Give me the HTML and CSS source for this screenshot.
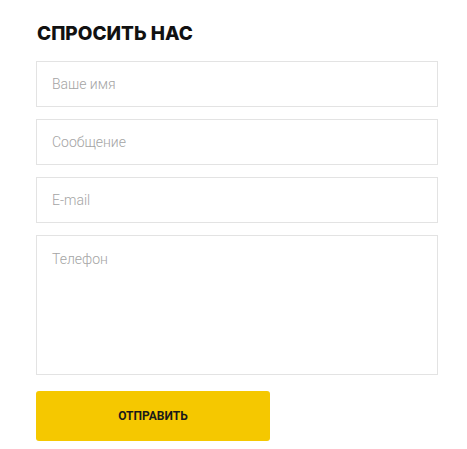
FILE: index.html
```html
<!DOCTYPE html>
<html lang="ru">
<head>
  <meta charset="UTF-8" />
  <meta name="viewport" content="width=device-width, initial-scale=1.0" />
  <title>Спросить нас</title>
  <link rel="stylesheet" href="styles.css">
</head>
<body>

<section class="ask">
  <h2>Спросить нас</h2>
  <form class="ask-form">
    <input type="text" placeholder="Ваше имя" />
    <input type="text" placeholder="Сообщение" />
    <input type="email" placeholder="E-mail" />
    <textarea placeholder="Телефон"></textarea>
    <button type="button">Отправить</button>
  </form>
</section>

</body>
</html>
```

FILE: styles.css
```css
* {
  box-sizing: border-box;
}

html, body {
  margin: 0;
  padding: 0;
  background: #fff;
  font-family: Roboto, 'Liberation Sans', sans-serif;
}

.ask {
  padding: 22px 29px 0 36px;
}

.ask h2 {
  margin: 0 0 15px 1px;
  font-family: Inter, 'Liberation Sans', sans-serif;
  font-weight: 800;
  font-size: 19px;
  line-height: 24px;
  text-transform: uppercase;
  color: #111;
}

.ask-form {
  display: flex;
  flex-direction: column;
  align-items: flex-start;
}

.ask-form input,
.ask-form textarea {
  width: 402px;
  height: 46px;
  margin-bottom: 12px;
  padding: 0 15px;
  border: 1px solid #e3e3e3;
  border-radius: 0;
  font-family: Roboto, sans-serif;
  font-weight: 300;
  font-size: 14px;
  color: #333;
  outline: none;
}

.ask-form textarea {
  height: 140px;
  padding-top: 15px;
  resize: none;
  margin-bottom: 16px;
}

.ask-form ::placeholder {
  color: #a4a4a4;
}

.ask-form button {
  width: 234px;
  height: 50px;
  border: none;
  border-radius: 3px;
  background: #f5c800;
  color: #1a1a1a;
  font-family: Roboto, sans-serif;
  font-weight: 700;
  font-size: 12px;
  text-transform: uppercase;
  cursor: pointer;
}
```
